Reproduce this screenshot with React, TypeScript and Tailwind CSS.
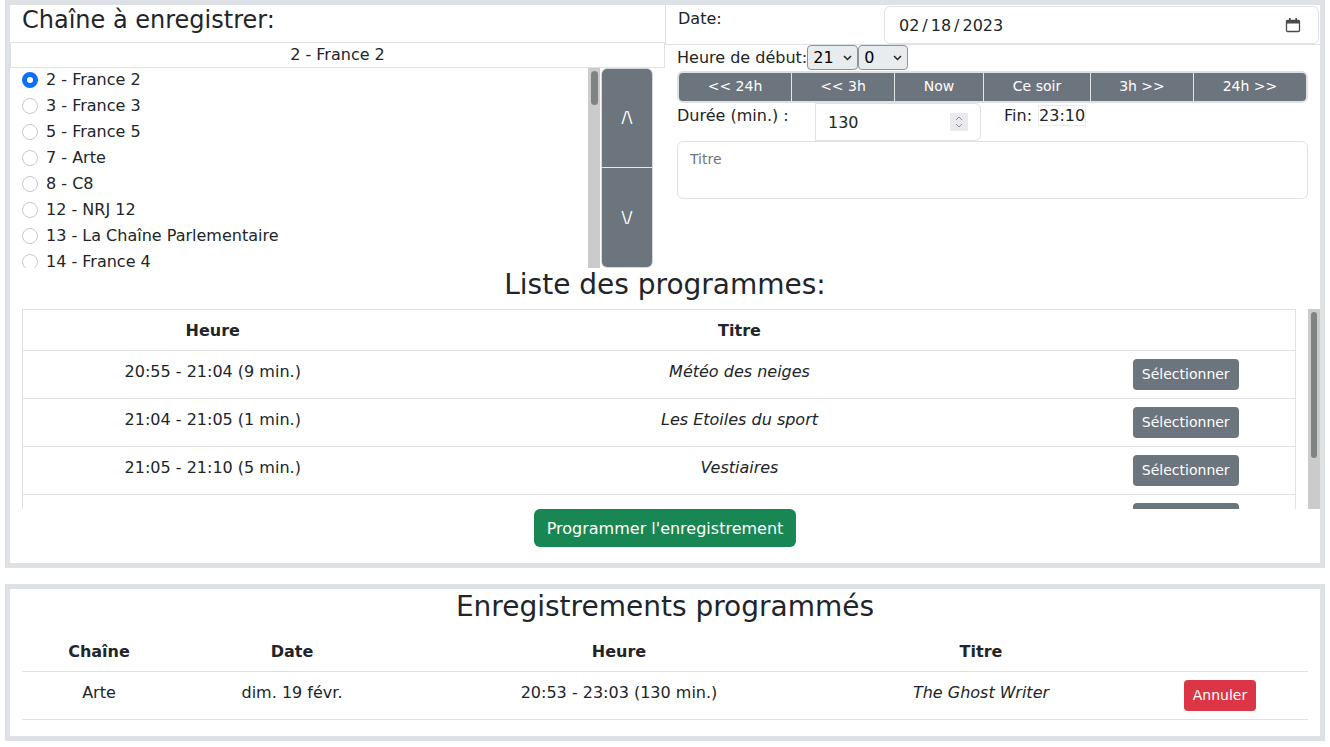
const channels = [
  "2 - France 2",
  "3 - France 3",
  "5 - France 5",
  "7 - Arte",
  "8 - C8",
  "12 - NRJ 12",
  "13 - La Chaîne Parlementaire",
  "14 - France 4",
];

const shortcuts = [
  { label: "<< 24h", width: "w-[113px]" },
  { label: "<< 3h", width: "w-[103px]" },
  { label: "Now", width: "w-[89px]" },
  { label: "Ce soir", width: "w-[107px]" },
  { label: "3h >>", width: "w-[103px]" },
  { label: "24h >>", width: "flex-1" },
];

const programmes = [
  { time: "20:55 - 21:04 (9 min.)", title: "Météo des neiges" },
  { time: "21:04 - 21:05 (1 min.)", title: "Les Etoiles du sport" },
  { time: "21:05 - 21:10 (5 min.)", title: "Vestiaires" },
  { time: "21:10 - 22:45 (95 min.)", title: "Paroles" },
];

const Chevron = () => (
  <svg width="9" height="6" viewBox="0 0 9 6" className="pointer-events-none absolute top-[10px] right-[6px]">
    <path d="M1 1l3.5 3.5L8 1" fill="none" stroke="#222" strokeWidth="1.5" />
  </svg>
);

const ChannelColumn = () => (
  <div className="w-[655px] shrink-0">
    <h4 className="h-[37px] pl-3 text-[24px] leading-[31px] font-normal">Chaîne à enregistrer:</h4>
    <div className="h-[26px] border border-[#dee2e6] text-center leading-[24px]">2 - France 2</div>
    <div className="flex h-[200px]">
      <ul className="h-[200px] w-[578px] overflow-hidden pl-3">
        {channels.map((name, key) => (
          <li key={key} className="flex h-[26px] items-center gap-2 pb-[2px]">
            <span
              className={
                key === 0
                  ? "size-4 rounded-full border-[5px] border-[#0d6efd] bg-white"
                  : "size-4 rounded-full border border-[#c6c9cc] bg-white"
              }
            />
            {name}
          </li>
        ))}
      </ul>
      <div className="h-[200px] w-3 bg-[#cbcbcb] pt-[3px]">
        <div className="mx-auto h-[34px] w-[7px] rounded bg-[#7f8381]" />
      </div>
      <div className="ml-px flex h-[200px] w-[52px] flex-col overflow-hidden rounded-md border border-[#d5d8db] text-white">
        <button className="flex h-[99px] items-center justify-center border-b border-[#e4e6e8] bg-[#6c757d]">/\</button>
        <button className="flex flex-1 items-center justify-center bg-[#6c757d]">\/</button>
      </div>
    </div>
  </div>
);

const ScheduleColumn = () => (
  <div className="flex-1">
    <div className="flex h-[40px] border-b border-l border-[#dee2e6]">
      <label className="w-[218px] pt-[2px] pl-[12px]">Date:</label>
      <div className="mt-px flex h-[38px] w-[435px] items-center rounded-md border border-[#dee2e6] pr-[17px] pl-[14px]">
        <span className="flex flex-1 gap-[3px] pt-[2px]">
          <span>02</span>
          <span>/</span>
          <span>18</span>
          <span>/</span>
          <span>2023</span>
        </span>
        <svg width="16" height="16" viewBox="0 0 16 16">
          <path d="M1.5 4.5a1 1 0 0 1 1-1h11a1 1 0 0 1 1 1v9a1 1 0 0 1-1 1h-11a1 1 0 0 1-1-1z" fill="none" stroke="#4a4a4a" strokeWidth="1.3" />
          <path d="M2 3.5h12v3H2zM4 1h1.6v3H4zM10.4 1H12v3h-1.6z" fill="#4a4a4a" />
        </svg>
      </div>
    </div>
    <div className="flex h-[26px] items-start pl-3">
      <span className="leading-[25px]">Heure de début:</span>
      <div className="relative">
        <select defaultValue="21" className="h-[25px] w-[51px] appearance-none rounded border border-[#8f9296] bg-[#e9ecef] pl-[5px] text-black">
          <option>21</option>
        </select>
        <Chevron />
      </div>
      <div className="relative">
        <select defaultValue="0" className="h-[25px] w-[50px] appearance-none rounded border border-[#8f9296] bg-[#e9ecef] pl-[5px] text-black">
          <option>0</option>
        </select>
        <Chevron />
      </div>
    </div>
    <div className="ml-[12px] flex h-[32px] w-[631px] overflow-hidden rounded-md border-2 border-[#dee2e6] bg-[#6c757d] text-[14px] text-white">
      {shortcuts.map((item, key) => (
        <button
          key={key}
          className={`${item.width} pb-[2px] ${key !== shortcuts.length - 1 ? "border-r border-[#e4e6e8]" : ""}`}
        >
          {item.label}
        </button>
      ))}
    </div>
    <div className="flex h-[38px] pl-3">
      <span className="w-[138px] pt-[1px]">Durée (min.) :</span>
      <div className="flex h-[38px] w-[166px] items-center rounded-r-md rounded-bl-none border border-[#dee2e6] pr-3 pl-3">
        <span className="flex-1 pt-[2px]">130</span>
        <svg width="18" height="18" viewBox="0 0 18 18" className="bg-[#e9e9ee]">
          <path d="M6 7l3-3 3 3M6 11l3 3 3-3" fill="none" stroke="#8a8d91" strokeWidth="1" />
        </svg>
      </div>
      <span className="ml-[23px] pt-[1px]">Fin:</span>
      <span className="ml-[6px] mt-[2px] h-[21px] border border-[#e9ecef] leading-[19px]">23:10</span>
    </div>
    <div className="ml-3 h-[58px] w-[631px] rounded-md border border-[#dee2e6] px-3 pt-[7px] text-[14px] leading-[20px] text-[#6c757d]">Titre</div>
  </div>
);

const ProgrammeList = () => (
  <div className="flex h-[200px] pl-3">
    <div className="h-[200px] w-[1286px] overflow-hidden">
      <table className="w-[1274px] table-fixed border border-[#dee2e6] text-center">
        <thead>
          <tr className="h-[41px] border-b border-[#dee2e6] font-bold">
            <th className="w-[380px] pt-[2px]">Heure</th>
            <th className="w-[674px] pt-[2px]">Titre</th>
            <th />
          </tr>
        </thead>
        <tbody>
          {programmes.map((item, key) => (
            <tr key={key} className="h-[48px] border-b border-[#dee2e6]">
              <td className="align-top pt-[9px]">{item.time}</td>
              <td className="align-top pt-[9px] italic">{item.title}</td>
              <td className="align-top pt-2">
                <button className="h-[31px] rounded bg-[#6c757d] px-[9px] text-[14px] text-white">Sélectionner</button>
              </td>
            </tr>
          ))}
        </tbody>
      </table>
    </div>
    <div className="h-[200px] w-3 bg-[#cbcbcb] pt-[3px]">
      <div className="mx-auto h-[146px] w-[6px] rounded bg-[#7f8381]" />
    </div>
  </div>
);

const App = () => (
  <div className="h-[747px] overflow-hidden bg-white px-[5px] font-['DejaVu_Sans',sans-serif] text-[16px] text-[#212529]">
    <section className="h-[568px] border-[5px] border-[#dee2e6]">
      <div className="flex h-[263px]">
        <ChannelColumn />
        <ScheduleColumn />
      </div>
      <h3 className="h-[41px] text-center text-[28px] leading-[34px] font-normal">Liste des programmes:</h3>
      <ProgrammeList />
      <div className="flex justify-center">
        <button className="h-[38px] rounded-md bg-[#198754] px-[13px] pt-[2px] text-white">Programmer l'enregistrement</button>
      </div>
    </section>
    <section className="mt-4 h-[157px] border-[5px] border-[#dee2e6] px-3">
      <h3 className="h-[42px] text-center text-[28px] leading-[36px] font-normal">Enregistrements programmés</h3>
      <table className="w-full table-fixed text-center">
        <thead>
          <tr className="h-[40px] border-b border-[#dee2e6] font-bold">
            <th className="w-[154px] pt-[2px]">Chaîne</th>
            <th className="w-[232px] pt-[2px]">Date</th>
            <th className="w-[422px] pt-[2px]">Heure</th>
            <th className="w-[302px] pt-[2px]">Titre</th>
            <th />
          </tr>
        </thead>
        <tbody>
          <tr className="h-[48px] border-b border-[#dee2e6]">
            <td className="align-top pt-[9px]">Arte</td>
            <td className="align-top pt-[9px]">dim. 19 févr.</td>
            <td className="align-top pt-[9px]">20:53 - 23:03 (130 min.)</td>
            <td className="align-top pt-[9px] italic">The Ghost Writer</td>
            <td className="align-top pt-2">
              <button className="h-[31px] rounded bg-[#dc3545] px-[9px] text-[14px] text-white">Annuler</button>
            </td>
          </tr>
        </tbody>
      </table>
    </section>
  </div>
);

export default App;
